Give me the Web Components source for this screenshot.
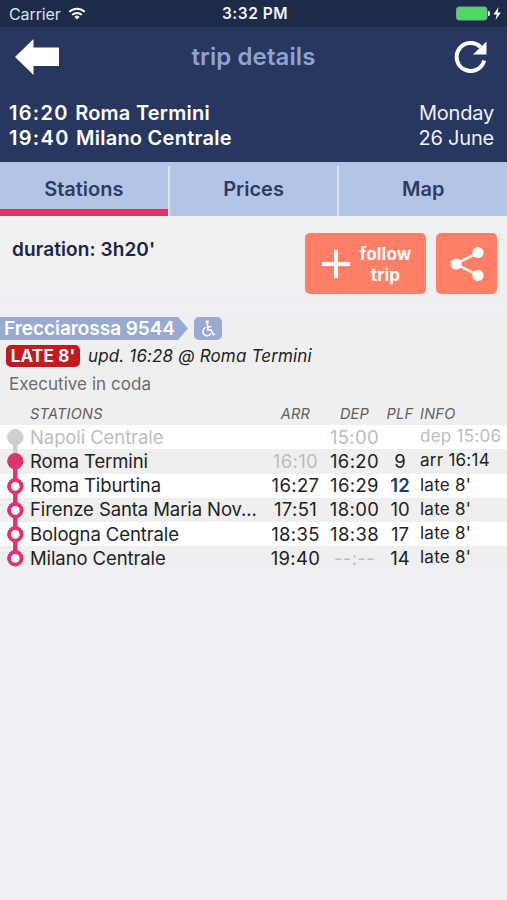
<!DOCTYPE html>
<html lang="en">
<head>
<meta charset="utf-8">
<title>trip details</title>
<style>
  body {
    margin: 0;
    width: 507px;
    height: 900px;
    overflow: hidden;
    background: #efeff4;
    color: #222;
    font-family: Inter, "Liberation Sans", sans-serif;
  }
</style>
</head>
<body>
<trip-app></trip-app>

<template id="status-bar">
  <style>
    :host { display: grid; grid-template-columns: 1fr auto 1fr; align-items: center; height: 27px; box-sizing: border-box; padding: 0 6px 0 9px; background: #1c2b47; color: #f2f4f8; font-size: 16px; white-space: nowrap; }
    .left { display: flex; align-items: center; gap: 7px; color: #dde1e9; letter-spacing: -0.1px; }
    .time { font-weight: 600; font-size: 15.5px; letter-spacing: 0.5px; }
    .right { display: flex; justify-content: flex-end; align-items: center; gap: 2px; }
    svg { display: block; }
  </style>
  <div class="left"><span>Carrier</span>
    <svg width="18" height="13" viewBox="0 0 18 13" fill="none" stroke="#fff" stroke-width="2">
      <path d="M1.3 4.9a10.8 10.8 0 0 1 15.4 0M4.2 7.9a6.8 6.8 0 0 1 9.6 0"/>
      <path d="M9 12.5 6.4 9.9a3.7 3.7 0 0 1 5.2 0z" fill="#fff" stroke="none"/>
    </svg>
  </div>
  <div class="time">3:32 PM</div>
  <div class="right">
    <svg width="46" height="15" viewBox="0 0 46 15">
      <rect x="1.500" y="1" width="30.500" height="13" rx="2.5" fill="#4cd964" stroke="#8f9a9c"/>
      <path d="M33 5h.7q1.3 0 1.3 2.5T33.7 10H33z" fill="#fff"/>
      <path d="M43.500 1 38.500 8.500h3.200L40.500 14l5.400-7.500h-3.300z" fill="#fff"/>
    </svg>
  </div>
</template>

<template id="nav-header">
  <style>
    :host { display: block; height: 135px; background: #27375f; color: #fff; }
    .bar { display: grid; grid-template-columns: 60px 1fr 60px; align-items: center; height: 60px; }
    .bar svg { display: block; }
    .back { margin-left: 15px; }
    .reload { margin-left: 6px; }
    h1 { margin: 0; text-align: center; font-size: 24px; line-height: 28px; font-weight: 600; letter-spacing: 0.1px; color: #8ea3d1; }
    .trip { display: flex; justify-content: space-between; padding: 14px 13px 0 9px; font-size: 20px; line-height: 24.5px; white-space: nowrap; }
    .legs { font-weight: 600; letter-spacing: 0.25px; }
    .day { text-align: right; color: #eef1f7; letter-spacing: -0.2px; }
  </style>
  <div class="bar">
    <svg class="back" width="45" height="36" viewBox="0 0 45 36"><path d="M0 18 18.500 0v8.500h25.500v18.500H18.500V36z" fill="#fff"/></svg>
    <h1><slot name="title"></slot></h1>
    <svg class="reload" width="36" height="36" viewBox="0 0 36 36">
      <path d="M27.500 8A14 14 0 1 0 31.200 21.500" fill="none" stroke="#fff" stroke-width="4"/>
      <path d="M33.500 2.500V15.500H20z" fill="#fff"/>
    </svg>
  </div>
  <div class="trip">
    <div class="legs"><slot name="from"></slot><slot name="to"></slot></div>
    <div class="day"><slot name="weekday"></slot><slot name="date"></slot></div>
  </div>
</template>

<template id="tab-item">
  <style>
    :host { display: flex; align-items: center; justify-content: center; flex: 1; box-sizing: border-box; height: 54px; padding-top: 7px; background: #b3c5e6; color: #2c3c64; font-size: 20px; font-weight: 600; border-bottom: 7px solid #b3c5e6; }
    :host([active]) { border-bottom-color: #dc3567; }
  </style>
  <slot></slot>
</template>

<template id="tab-bar">
  <style>
    :host { display: flex; height: 54px; background: #b3c5e6; }
    i { width: 2px; height: 50px; margin-top: 4px; background: #dfe2e8; }
  </style>
  <tab-item active>Stations</tab-item><i></i><tab-item>Prices</tab-item><i></i><tab-item>Map</tab-item>
</template>

<template id="trip-actions">
  <style>
    :host { display: flex; height: 101px; box-sizing: border-box; padding: 17px 10px 0 12px; color: #fff; }
    .duration { flex: 1; padding-top: 5px; color: #1c2348; font-size: 19px; line-height: 24px; font-weight: 600; letter-spacing: 0.1px; }
    .button { display: flex; align-items: center; justify-content: center; box-sizing: border-box; height: 61px; border-radius: 5px; background: #ff8066; }
    .follow { width: 121px; gap: 10px; padding-left: 2px; margin-right: 10px; font-size: 17px; line-height: 21px; font-weight: 700; text-align: center; letter-spacing: 0.2px; }
    .follow span { padding-top: 2px; }
    .share { width: 61px; }
    svg { display: block; }
  </style>
  <div class="duration">duration: 3h20'</div>
  <div class="button follow">
    <svg width="28" height="28" viewBox="0 0 28 28"><path d="M14 0v28M0 14h28" stroke="#fff" stroke-width="4"/></svg>
    <span>follow<br>trip</span>
  </div>
  <div class="button share">
    <svg width="34" height="36" viewBox="0 0 34 36">
      <path d="M28 6.500 6 18l22 11.500" fill="none" stroke="#fff" stroke-width="2.500"/>
      <g fill="#fff"><circle cx="28" cy="6.500" r="5.500"/><circle cx="6" cy="18" r="5.500"/><circle cx="28" cy="29.500" r="5.500"/></g>
    </svg>
  </div>
</template>

<template id="train-info">
  <style>
    :host { display: block; height: 88px; white-space: nowrap; }
    div { display: flex; align-items: center; }
    .name { box-sizing: border-box; width: 188px; height: 23px; padding-left: 4px; background: #99a9cf; color: #fff; font-size: 19px; line-height: 24px; font-weight: 600; letter-spacing: -0.05px; clip-path: polygon(0 0, 178px 0, 188px 50%, 178px 100%, 0 100%); }
    .access { display: block; margin-left: 6px; }
    .state { margin-top: 5px; padding-left: 6px; height: 22px; gap: 8px; font-size: 17px; }
    .late { box-sizing: border-box; width: 74px; height: 22px; border-radius: 5px; background: #c51a1d; color: #fff; font-size: 17px; line-height: 22px; font-weight: 700; text-align: center; letter-spacing: 0.2px; }
    .note { padding-left: 9px; margin-top: 5px; height: 24px; color: #6c6c6c; font-size: 17px; letter-spacing: 0.05px; }
    em { color: #222; letter-spacing: 0.15px; }
  </style>
  <div><span class="name">Frecciarossa 9544</span>
    <svg class="access" width="28" height="23" viewBox="0 0 28 23">
      <rect width="28" height="23" rx="5" fill="#99a9cf"/>
      <circle cx="13.200" cy="5" r="1.700" fill="#fff"/>
      <path d="M13.400 6.500l.4 6.500h3.500l2 4.800 1.500-.8M13.600 9.700h3.700M11.500 10.500a4.300 4.300 0 1 0 5.600 5.800" fill="none" stroke="#fff" stroke-width="1.500"/>
    </svg>
  </div>
  <div class="state"><span class="late">LATE 8'</span><em>upd. 16:28 @ Roma Termini</em></div>
  <div class="note">Executive in coda</div>
</template>

<template id="station-row">
  <style>
    :host { display: grid; grid-template-columns: 30px 236px 59px 59px 32px 1fr; align-items: center; height: 24.25px; color: #222; font-size: 18.5px; line-height: 23px; white-space: nowrap; text-align: center; }
    :host(:nth-of-type(odd)) { background: #fff; }
    .name, .info { text-align: left; }
    .name { letter-spacing: -0.1px; }
    .arr, .dep { letter-spacing: 0.35px; }
    .info { padding-left: 4px; padding-bottom: 1px; font-size: 17px; letter-spacing: 0.25px; }
    svg { display: block; }
    .passed { color: #bdbdbd; }
    .changed { color: #223a72; font-weight: 600; }
  </style>
  <svg width="30" height="24.250" viewBox="0 0 30 24.250"></svg>
  <span class="name"></span>
  <span class="arr"></span>
  <span class="dep"></span>
  <span class="plf"></span>
  <span class="info"></span>
</template>

<template id="station-table">
  <style>
    :host { display: block; background: #efefef; }
    header { display: grid; grid-template-columns: 236px 59px 59px 32px 1fr; align-items: center; height: 20px; padding-left: 30px; box-sizing: border-box; padding-bottom: 3px; color: #606060; font-size: 14.5px; font-style: italic; text-align: center; letter-spacing: 0.25px; }
    .left { text-align: left; }
    .info { text-align: left; padding-left: 4px; }
  </style>
  <header><span class="left">STATIONS</span><span>ARR</span><span>DEP</span><span>PLF</span><span class="info">INFO</span></header>
  <station-row state="passed" name="Napoli Centrale" dep="15:00" info="dep 15:06"></station-row>
  <station-row state="current" name="Roma Termini" arr="16:10" dep="16:20" plf="9" info="arr 16:14"></station-row>
  <station-row name="Roma Tiburtina" arr="16:27" dep="16:29" plf="12" plf-changed info="late 8'"></station-row>
  <station-row name="Firenze Santa Maria Nov..." arr="17:51" dep="18:00" plf="10" info="late 8'"></station-row>
  <station-row name="Bologna Centrale" arr="18:35" dep="18:38" plf="17" info="late 8'"></station-row>
  <station-row last name="Milano Centrale" arr="19:40" dep="--:--" plf="14" info="late 8'"></station-row>
</template>

<template id="trip-app">
  <style>
    :host { display: block; }
    nav-header span { display: block; }
    time { letter-spacing: 1.3px; }
    main { background: linear-gradient(#f0f0f0 60px, #efeff4 96px, #efeff0 120px, #efefef); }
  </style>
  <status-bar></status-bar>
  <nav-header>
    <span slot="title">trip details</span>
    <span slot="from"><time>16:20 </time>Roma Termini</span>
    <span slot="to"><time>19:40 </time>Milano Centrale</span>
    <span slot="weekday">Monday</span>
    <span slot="date">26 June</span>
  </nav-header>
  <tab-bar></tab-bar>
  <main>
    <trip-actions></trip-actions>
    <train-info></train-info>
    <station-table></station-table>
  </main>
</template>

<script>
  class TemplateElement extends HTMLElement {
    constructor() {
      super();
      this.attachShadow({ mode: "open" });
      const template = document.getElementById(this.localName);
      this.shadowRoot.appendChild(template.content.cloneNode(true));
    }
  }

  class StationRow extends TemplateElement {
    connectedCallback() {
      const root = this.shadowRoot;
      ["name", "arr", "dep", "plf", "info"].forEach((key) => {
        root.querySelector("." + key).textContent = this.getAttribute(key) || "";
      });
      const state = this.getAttribute("state");
      if (state === "passed") this.style.color = "#bdbdbd";
      if (state === "current") root.querySelector(".arr").classList.add("passed");
      if (this.getAttribute("dep") === "--:--") root.querySelector(".dep").classList.add("passed");
      if (this.hasAttribute("plf-changed")) root.querySelector(".plf").classList.add("changed");
      this.drawStop(state);
    }

    // piece of the route line, then the stop dot over it
    drawStop(state) {
      const color = state === "passed" ? "#cfcfcf" : "#dc3567";
      let line = "";
      if (state !== "passed") {
        const above = state === "current" ? "#cfcfcf" : color;
        line += `<path d="M15.300 0v12" stroke="${above}" stroke-width="4.500"/>`;
      }
      if (!this.hasAttribute("last")) {
        line += `<path d="M15.300 12v13" stroke="${color}" stroke-width="4.500"/>`;
      }
      const dot = state
        ? `<circle cx="15.300" cy="12.300" r="8.200" fill="${color}"/>`
        : `<circle cx="15.300" cy="12.300" r="6.300" fill="#fff" stroke="${color}" stroke-width="3.800"/>`;
      this.shadowRoot.querySelector("svg").innerHTML = line + dot;
    }
  }

  customElements.define("station-row", StationRow);
  ["status-bar", "nav-header", "tab-item", "tab-bar", "trip-actions", "train-info", "station-table", "trip-app"].forEach((name) => {
    customElements.define(name, class extends TemplateElement {});
  });
</script>
</body>
</html>
